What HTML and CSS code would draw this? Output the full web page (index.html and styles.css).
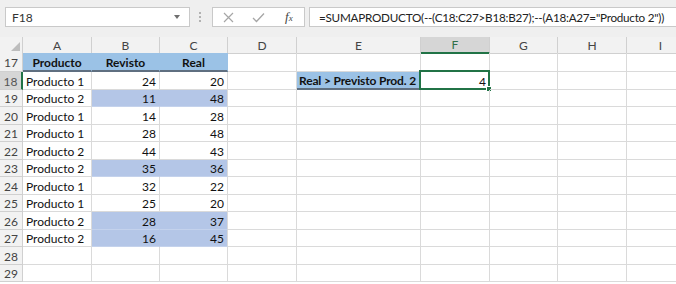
FILE: index.html
```html
<!DOCTYPE html>
<html>
<head>
<meta charset="utf-8">
<link rel="stylesheet" href="styles.css">
</head>
<body>
<div class="app">
  <div class="fbar">
    <div class="namebox"><span>F18</span><span class="caret"></span></div>
    <div class="grip"><i></i><i></i><i></i></div>
    <div class="btns">
      <svg class="ico" width="11" height="11" viewBox="0 0 11 11"><path d="M1 1L10 10M10 1L1 10" stroke="#a6a6a6" stroke-width="1.2" fill="none"/></svg>
      <svg class="ico" width="13" height="11" viewBox="0 0 13 11"><path d="M1 6L4.5 9.5L12 1.5" stroke="#a6a6a6" stroke-width="1.3" fill="none"/></svg>
      <span class="fx"><i>f</i><span class="fxx">x</span></span>
    </div>
    <div class="formula">=SUMAPRODUCTO(--(C18:C27&gt;B18:B27);--(A18:A27="Producto 2"))</div>
  </div>
  <div class="sheet">
    <div class="row colhdr">
      <div class="corner"><span class="tri"></span></div>
      <div class="ch">A</div><div class="ch">B</div><div class="ch">C</div><div class="ch">D</div>
      <div class="ch">E</div><div class="ch sel">F</div><div class="ch">G</div><div class="ch">H</div><div class="ch">I</div>
    </div>
    <div class="row r17">
      <div class="rh">17</div>
      <div class="c th">Producto</div><div class="c th">Revisto</div><div class="c th">Real</div>
      <div class="c"></div><div class="c"></div><div class="c"></div><div class="c"></div><div class="c"></div><div class="c"></div>
    </div>
    <div class="row r">
      <div class="rh sel">18</div>
      <div class="c">Producto 1</div><div class="c n">24</div><div class="c n">20</div>
      <div class="c"></div><div class="c lbl">Real &gt; Previsto Prod. 2</div>
      <div class="c n active">4<span class="selbox"><span class="handle"></span></span></div>
      <div class="c"></div><div class="c"></div><div class="c"></div>
    </div>
    <div class="row r">
      <div class="rh">19</div>
      <div class="c">Producto 2</div><div class="c n hl hlb">11</div><div class="c n hl">48</div>
      <div class="c"></div><div class="c"></div><div class="c"></div><div class="c"></div><div class="c"></div><div class="c"></div>
    </div>
    <div class="row r">
      <div class="rh">20</div>
      <div class="c">Producto 1</div><div class="c n">14</div><div class="c n">28</div>
      <div class="c"></div><div class="c"></div><div class="c"></div><div class="c"></div><div class="c"></div><div class="c"></div>
    </div>
    <div class="row r">
      <div class="rh">21</div>
      <div class="c">Producto 1</div><div class="c n">28</div><div class="c n">48</div>
      <div class="c"></div><div class="c"></div><div class="c"></div><div class="c"></div><div class="c"></div><div class="c"></div>
    </div>
    <div class="row r">
      <div class="rh">22</div>
      <div class="c">Producto 2</div><div class="c n">44</div><div class="c n">43</div>
      <div class="c"></div><div class="c"></div><div class="c"></div><div class="c"></div><div class="c"></div><div class="c"></div>
    </div>
    <div class="row r">
      <div class="rh">23</div>
      <div class="c">Producto 2</div><div class="c n hl hlb">35</div><div class="c n hl">36</div>
      <div class="c"></div><div class="c"></div><div class="c"></div><div class="c"></div><div class="c"></div><div class="c"></div>
    </div>
    <div class="row r">
      <div class="rh">24</div>
      <div class="c">Producto 1</div><div class="c n">32</div><div class="c n">22</div>
      <div class="c"></div><div class="c"></div><div class="c"></div><div class="c"></div><div class="c"></div><div class="c"></div>
    </div>
    <div class="row r">
      <div class="rh">25</div>
      <div class="c">Producto 1</div><div class="c n">25</div><div class="c n">20</div>
      <div class="c"></div><div class="c"></div><div class="c"></div><div class="c"></div><div class="c"></div><div class="c"></div>
    </div>
    <div class="row r">
      <div class="rh">26</div>
      <div class="c">Producto 2</div><div class="c n hl hlb">28</div><div class="c n hl">37</div>
      <div class="c"></div><div class="c"></div><div class="c"></div><div class="c"></div><div class="c"></div><div class="c"></div>
    </div>
    <div class="row r">
      <div class="rh">27</div>
      <div class="c">Producto 2</div><div class="c n hl hlb">16</div><div class="c n hl">45</div>
      <div class="c"></div><div class="c"></div><div class="c"></div><div class="c"></div><div class="c"></div><div class="c"></div>
    </div>
    <div class="row r">
      <div class="rh">28</div>
      <div class="c"></div><div class="c"></div><div class="c"></div><div class="c"></div><div class="c"></div><div class="c"></div><div class="c"></div><div class="c"></div><div class="c"></div>
    </div>
    <div class="row r">
      <div class="rh">29</div>
      <div class="c"></div><div class="c"></div><div class="c"></div><div class="c"></div><div class="c"></div><div class="c"></div><div class="c"></div><div class="c"></div><div class="c"></div>
    </div>
  </div>
</div>
</body>
</html>
```

FILE: styles.css
```css
* { box-sizing: border-box; }
html, body { margin: 0; padding: 0; background: #ffffff; }
body { font-family: Lato, "Liberation Sans", sans-serif; color: #1a1a1a; }

.app { width: 676px; height: 284px; overflow: hidden; }

.fbar {
  height: 37px;
  background: #efefef;
  display: flex;
  align-items: flex-start;
  padding-top: 7px;
}
.namebox {
  flex: 0 0 185px;
  margin-left: 5px;
  height: 20px;
  background: #fff;
  border: 1px solid #c9c9c9;
  display: flex;
  align-items: center;
  justify-content: space-between;
  padding: 0 9px 0 6px;
  font-size: 12px;
  color: #333;
}
.caret {
  width: 0; height: 0;
  border-left: 3.5px solid transparent;
  border-right: 3.5px solid transparent;
  border-top: 4px solid #6f6f6f;
}
.grip {
  flex: 0 0 22px;
  height: 20px;
  padding-right: 3px;
  display: flex;
  flex-direction: column;
  align-items: center;
  justify-content: center;
  gap: 2px;
}
.grip i { width: 2px; height: 2px; background: #b2b2b2; display: block; }
.btns {
  flex: 0 0 93px;
  height: 20px;
  background: #fff;
  border: 1px solid #c9c9c9;
  display: flex;
  align-items: center;
  padding-left: 10px;
  gap: 18px;
}
.fx { font-family: "Liberation Serif", serif; font-size: 13px; color: #444; margin-left: 2px; }
.fx i { font-style: italic; }
.fxx { font-style: italic; font-size: 9px; }
.formula {
  margin-left: 4px;
  flex: 1 1 auto;
  min-width: 0;
  overflow: hidden;
  height: 20px;
  background: #fff;
  border: 1px solid #c9c9c9;
  border-right: none;
  padding-left: 9px;
  font-size: 11.7px;
  letter-spacing: -0.25px;
  line-height: 18px;
  white-space: nowrap;
  color: #222;
}

.sheet { display: flex; flex-direction: column; }
.row {
  display: grid;
  grid-template-columns: 23px 69px 68px 68px 69px 124px 69px 68px 69px 68px;
  width: 694px;
}
.colhdr { height: 16px; }
.r17 { height: 19px; }
.r { height: 17px; }
.r:nth-child(odd) { height: 18px; }

.corner, .ch, .rh {
  background: #f2f2f2;
  border-right: 1px solid #d0d0d0;
  border-bottom: 1px solid #d0d0d0;
  color: #444;
  font-size: 12px;
  display: flex;
  align-items: center;
  justify-content: center;
}
.rh { padding-top: 1px; }
.corner { justify-content: flex-end; align-items: flex-end; padding: 0 2px 2px 0; }
.tri {
  width: 0; height: 0;
  border-left: 9px solid transparent;
  border-bottom: 9px solid #bdbdbd;
}
.ch.sel { background: #d6d6d6; border-bottom: 2px solid #217346; color: #2f6f48; }
.rh.sel { background: #d6d6d6; border-right: 2px solid #217346; color: #555; }

.c {
  border-right: 1px solid #dadada;
  border-bottom: 1px solid #dadada;
  font-size: 12px;
  display: flex;
  align-items: center;
  padding: 1px 3px 0 3px;
  white-space: nowrap;
  color: #111;
  position: relative;
}
.c.n { justify-content: flex-end; }
.c.th {
  background: #9bc2e6;
  border-right-color: #9bc2e6;
  border-bottom: 2px solid #5f6f80;
  font-weight: bold;
  justify-content: center;
}
.c.hl { background: #b4c6e7; border-bottom-color: #c4d2ec; }
.c.hlb { border-right-color: #b4c6e7; }
.c.lbl {
  background: #9bc2e6;
  border-bottom: 2px solid #5f6f80;
  font-weight: bold;
  letter-spacing: -0.15px;
  padding-left: 2px;
}
.selbox {
  position: absolute;
  left: -2px; top: -2px; right: -1px; bottom: -1px;
  border: 2px solid #217346;
}
.handle {
  position: absolute;
  right: -4px; bottom: -4px;
  width: 6px; height: 6px;
  background: #217346;
  border: 1px solid #fff;
}
```
